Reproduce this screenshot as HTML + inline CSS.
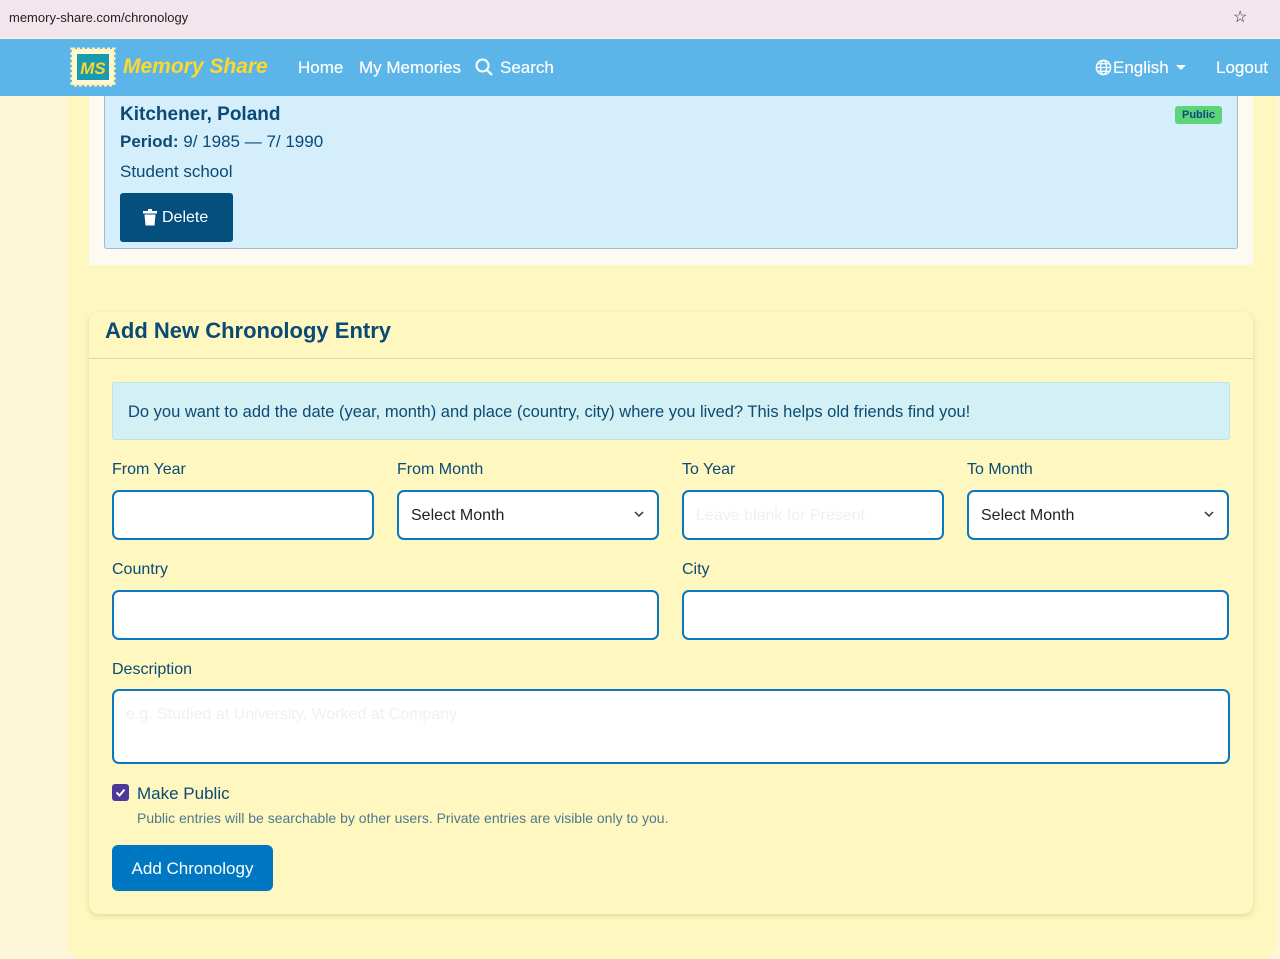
<!DOCTYPE html>
<html><head><meta charset="utf-8"><style>
*{box-sizing:border-box;margin:0;padding:0}
html{overflow:hidden;height:959px}
body{width:1280px;height:959px;overflow:hidden;background:#fdf6d8;font-family:"Liberation Sans",sans-serif;position:relative;color:#0a4a75}
.abs{position:absolute}
.url{left:0;top:0;width:1280px;height:38px;background:#f3e5ec;font-size:13px;color:#222;padding:10px 0 0 9px}
.nav{left:0;top:39px;width:1280px;height:57px;background:#5bb5e8;color:#fff;font-size:17px}
.nav span{position:absolute;top:19px;font-weight:500;text-shadow:0 0 .4px #fff}
.cont{left:67px;top:96px;width:1209px;height:863px;background:#fef7c0;border-radius:0 0 16px 16px}
.top{left:89px;top:96px;width:1164px;height:169px;background:#fdfbf1}
.blue{left:104px;top:96px;width:1134px;height:153px;background:#d4eefc;border:1px solid #a9b6c6;border-top:none;border-radius:0 0 3px 3px}
.card{left:89px;top:312px;width:1164px;height:602px;background:#fef7c0;border-radius:10px;box-shadow:0 2px 6px rgba(150,130,60,.25)}
.lbl{font-size:16px;color:#0a4a75}
.inp{height:50px;border:2px solid #0a77bf;border-radius:7px;background:#fff;font-size:16px;color:#222;padding:15px 12px}
.chev{position:absolute;right:12px;top:16px}
</style></head><body>
<div class="abs url">memory-share.com/chronology<span style="position:absolute;left:1233px;top:7px;font-size:16px">☆</span></div>
<div class="abs nav">
 <svg class="abs" style="left:70px;top:8px" width="46" height="40" viewBox="0 0 46 40"><rect x="2" y="2" width="42" height="36" fill="#fff8d0" stroke="#fff3b0" stroke-width="3" stroke-dasharray="3 2"/><rect x="7" y="7" width="32" height="26" fill="#1a9ab0"/><text x="23" y="27" font-family="Liberation Sans" font-style="italic" font-weight="bold" font-size="17" fill="#ffd530" text-anchor="middle">MS</text></svg>
 <span style="left:123px;top:16px;font-size:21px;font-style:italic;font-weight:bold;color:#ffd82a;text-shadow:none">Memory Share</span>
 <span style="left:298px">Home</span>
 <span style="left:359px">My Memories</span>
 <svg class="abs" style="left:475px;top:19px" width="18" height="18" viewBox="0 0 18 18"><circle cx="7.5" cy="7.5" r="6" fill="none" stroke="#fff" stroke-width="2"/><path d="M12 12l5 5" stroke="#fff" stroke-width="2.2"/></svg>
 <span style="left:500px">Search</span>
 <svg class="abs" style="left:1095px;top:20px" width="17" height="17" viewBox="0 0 18 18"><circle cx="9" cy="9" r="7.5" fill="none" stroke="#fff" stroke-width="1.6"/><ellipse cx="9" cy="9" rx="3.2" ry="7.5" fill="none" stroke="#fff" stroke-width="1.4"/><path d="M1.5 9h15M3 5h12M3 13h12" stroke="#fff" stroke-width="1.3"/></svg>
 <span style="left:1113px">English</span>
 <span style="left:1176px;top:26px;width:0;height:0;border-left:5px solid transparent;border-right:5px solid transparent;border-top:5px solid #fff"></span>
 <span style="left:1216px">Logout</span>
</div>
<div class="abs cont"></div>
<div class="abs top"></div>
<div class="abs blue">
 <div class="abs" style="left:15px;top:8px;font-size:19px;font-weight:bold;color:#0a4a75">Kitchener, Poland</div>
 <div class="abs" style="left:15px;top:36px;font-size:17px"><b>Period:</b> 9/ 1985 — 7/ 1990</div>
 <div class="abs" style="left:15px;top:66px;font-size:17px">Student school</div>
 <div class="abs" style="left:15px;top:97px;width:113px;height:49px;background:#044f7e;border-radius:3px;color:#fff;font-size:16px;padding:16px 0 0 23px"><svg style="position:absolute;left:23px;top:16px" width="14" height="17" viewBox="0 0 14 17"><rect x="0" y="2" width="14" height="2.5" fill="#fff"/><rect x="5" y="0" width="4" height="3" fill="#fff"/><path d="M1.5 5.5h11l-1 11h-9z" fill="#fff"/></svg><span style="margin-left:19px">Delete</span></div>
 <div class="abs" style="left:1070px;top:10px;width:47px;height:18px;background:#5dd37a;border-radius:3px;font-size:11px;font-weight:bold;color:#0a4a75;text-align:center;padding-top:3px">Public</div>
</div>
<div class="abs card">
 <div class="abs" style="left:16px;top:6px;font-size:22px;font-weight:bold;color:#0a4a75">Add New Chronology Entry</div>
 <div class="abs" style="left:0;top:46px;width:1164px;height:1px;background:#e0d8a8"></div>
 <div class="abs" style="left:23px;top:70px;width:1118px;height:58px;background:#d3f0f4;border:1px solid #b8e5ef;border-radius:3px;font-size:16.5px;padding:20px 15px">Do you want to add the date (year, month) and place (country, city) where you lived? This helps old friends find you!</div>
</div>
<div class="abs lbl" style="left:112px;top:461px">From Year</div>
<div class="abs lbl" style="left:397px;top:461px">From Month</div>
<div class="abs lbl" style="left:682px;top:461px">To Year</div>
<div class="abs lbl" style="left:967px;top:461px">To Month</div>
<div class="abs inp" style="left:112px;top:490px;width:262px"></div>
<div class="abs inp" style="left:397px;top:490px;width:262px">Select Month<svg class="chev" width="12" height="12" viewBox="0 0 12 12"><path d="M2 4l4 4 4-4" fill="none" stroke="#333" stroke-width="1.5"/></svg></div>
<div class="abs inp" style="left:682px;top:490px;width:262px;color:#eef0f2">Leave blank for Present</div>
<div class="abs inp" style="left:967px;top:490px;width:262px">Select Month<svg class="chev" width="12" height="12" viewBox="0 0 12 12"><path d="M2 4l4 4 4-4" fill="none" stroke="#333" stroke-width="1.5"/></svg></div>
<div class="abs lbl" style="left:112px;top:561px">Country</div>
<div class="abs lbl" style="left:682px;top:561px">City</div>
<div class="abs inp" style="left:112px;top:590px;width:547px"></div>
<div class="abs inp" style="left:682px;top:590px;width:547px"></div>
<div class="abs lbl" style="left:112px;top:661px">Description</div>
<div class="abs inp" style="left:112px;top:689px;width:1118px;height:75px;color:#eef0f2">e.g. Studied at University, Worked at Company</div>
<div class="abs" style="left:112px;top:784px;width:17px;height:17px;background:#4b3a9a;border-radius:3px"><svg width="17" height="17" viewBox="0 0 17 17"><path d="M4.5 8.5l3 3 5-6" fill="none" stroke="#fff" stroke-width="2"/></svg></div>
<div class="abs" style="left:137px;top:784px;font-size:17px">Make Public</div>
<div class="abs" style="left:137px;top:810px;font-size:14px;color:#4e7a8e">Public entries will be searchable by other users. Private entries are visible only to you.</div>
<div class="abs" style="left:112px;top:845px;width:161px;height:46px;background:#0077c2;border-radius:6px;color:#fff;font-size:17px;text-align:center;padding-top:14px">Add Chronology</div>
</body></html>
